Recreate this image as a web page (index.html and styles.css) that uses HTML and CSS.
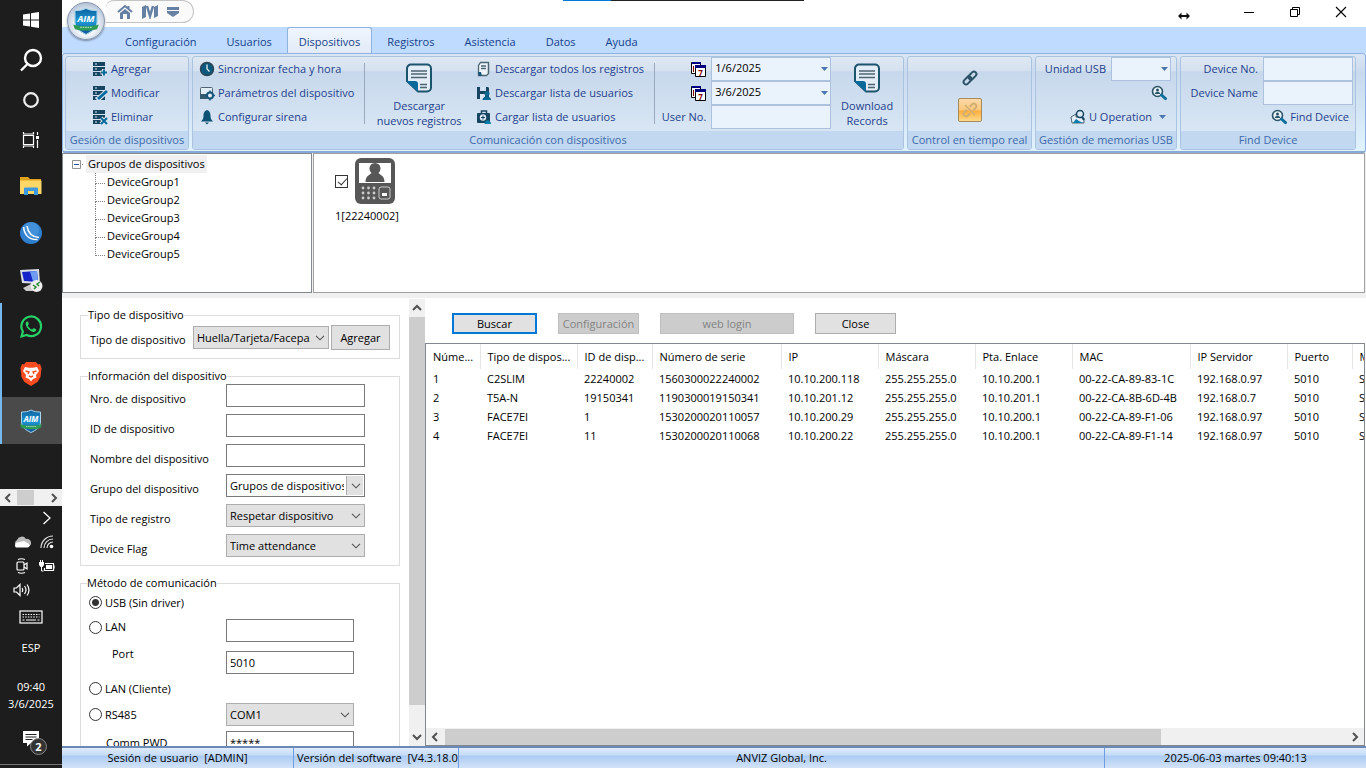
FILE: index.html
```html
<!DOCTYPE html>
<html lang="es">
<head>
    <meta charset="UTF-8">
    <meta name="viewport" content="width=device-width, initial-scale=1.0">
    <title>Dispositivos</title>
    <link rel="stylesheet" href="styles.css">
</head>
<body>

    <svg class="sprite" width="0" height="0" aria-hidden="true">
        <linearGradient id="shield-fill" x1="0" y1="0" x2="0" y2="1">
            <stop offset="0" stop-color="#0c5f9e"/>
            <stop offset=".5" stop-color="#1f9ad6"/>
            <stop offset="1" stop-color="#0d4f96"/>
        </linearGradient>
        <symbol id="i-shield" viewBox="0 0 24 24">
            <path d="M12 1c3 1.800 6 2 9.500 2v10c0 5-4 8-9.500 10.500C6.500 21 2.500 18 2.500 13V3C6 3 9 2.800 12 1z" fill="url(#shield-fill)" stroke="#a9d4ea" stroke-width="1"/>
            <path d="M1 15c6 2 16 2 22 0l-1.500 4c-5 1.600-14 1.600-19 0z" fill="#2f9a55"/>
            <path d="M7 17.500h10" stroke="#9bd8ad" stroke-width="1" stroke-dasharray="1.500 .6"/>
        </symbol>
        <symbol id="i-server" viewBox="0 0 16 16">
            <path d="M1 1h12v4H1zM1 6h12v4H1zM1 11h12v4H1z" fill="#17455f"/>
            <path d="M3 3h2M3 8h2M3 13h2" stroke="#dbe8f5" stroke-width="1"/>
        </symbol>
        <symbol id="i-doc" viewBox="0 0 28 30">
            <path d="M6 1.500h16a4 4 0 0 1 4 4v19a4 4 0 0 1-4 4H13L2 18V5.500a4 4 0 0 1 4-4z" fill="#e3edf7" stroke="#1c536d" stroke-width="2"/>
            <path d="M6 8h16M6 11h16M6 14.500h16M15 21.500h7M15 24.500h7" stroke="#4d6473" stroke-width="1.300"/>
            <path d="M1 18h9c2 0 3 1 3 3v8z" fill="#08699b"/>
        </symbol>
        <symbol id="i-find" viewBox="0 0 16 16">
            <circle cx="6.500" cy="6.500" r="5" fill="#e6f0f8" stroke="#2c5365" stroke-width="1.600"/>
            <circle cx="6.500" cy="5" r="1.500" fill="#2c5365"/>
            <path d="M3.800 9c.5-3 5-3 5.400 0z" fill="#2c5365"/>
            <path d="M10.500 10l4 3.600" stroke="#0e6f9b" stroke-width="3" stroke-linecap="round"/>
        </symbol>
        <symbol id="i-cal" viewBox="0 0 16 16">
            <path d="M1.500 1.500h9v11h-9z" fill="#fff" stroke="#000"/>
            <path d="M2 1h9v2H2z" fill="#000080"/>
            <path d="M5.500 4.500h10v11h-10z" fill="#fff" stroke="#000"/>
            <path d="M5 4h11v3H5z" fill="#000080"/>
            <path d="M3.500 5v6" stroke="#800000"/>
        </symbol>
        <symbol id="i-link" viewBox="0 0 16 16">
            <g transform="rotate(-45 8 8)" fill="none" stroke="currentColor" stroke-width="2">
                <rect x="0" y="5.500" width="9" height="5" rx="2.500"/>
                <rect x="7" y="5.500" width="9" height="5" rx="2.500"/>
            </g>
        </symbol>
        <symbol id="i-unlink" viewBox="0 0 16 16">
            <g transform="rotate(-45 8 8)" fill="none" stroke="currentColor" stroke-width="2">
                <path d="M6 5.500H2.500a2.500 2.500 0 0 0 0 5H6M10 5.500h3.500a2.500 2.500 0 0 1 0 5H10"/>
            </g>
            <path d="M3 3l10 10" stroke="currentColor" stroke-width="1.600"/>
        </symbol>
        <symbol id="i-chev" viewBox="0 0 10 6">
            <path d="M1 .8l4 4 4-4" fill="none" stroke="#555" stroke-width="1.100"/>
        </symbol>
        <symbol id="i-tri" viewBox="0 0 7 4">
            <path d="M0 0h7L3.500 4z" fill="#4a76b0"/>
        </symbol>
        <symbol id="i-arrow" viewBox="0 0 10 10">
            <path d="M7 1L3 5l4 4" fill="none" stroke="#505050" stroke-width="2"/>
        </symbol>
    </svg>

    <nav class="taskbar">
        <div class="pinned">
            <button class="task small" aria-label="Inicio"><svg width="18" height="18" viewBox="0 0 18 18"><path d="M1 3.500l7-1v6H1zM9 2.300L17 1v7.500H9zM1 9.500h7v6l-7-1zM9 9.500h8V17l-8-1.300z" fill="#fff"/></svg></button>
            <button class="task small" aria-label="Buscar"><svg width="24" height="24" viewBox="0 0 24 24"><g fill="none" stroke="#fff" stroke-width="2.400"><circle cx="14" cy="10" r="8"/><path d="M8.500 16L2 22.500"/></g></svg></button>
            <button class="task small" aria-label="Cortana"><svg width="18" height="18" viewBox="0 0 18 18"><circle cx="9" cy="9" r="6.800" fill="none" stroke="#eee" stroke-width="2.200"/></svg></button>
            <button class="task small" aria-label="Vista de tareas"><svg width="18" height="18" viewBox="0 0 18 18"><g fill="none" stroke="#fff" stroke-width="1.200"><path d="M1.500 4.500h10v9h-10zM1.500 1v2h10V1M1.500 17v-2h10v2M15.500 1v3M15.500 9v8"/></g><path d="M14 5h3v3h-3z" fill="#fff"/></svg></button>
        </div>
        <div class="running">
            <button class="task" aria-label="Explorador"><svg width="22" height="18" viewBox="0 0 22 18"><path d="M0 0h8l2 2h11v4H0z" fill="#e0a11b"/><path d="M0 3.500h21.500V17H0z" fill="#fcd667"/><path d="M4 18v-6.500a1 1 0 0 1 1-1h12a1 1 0 0 1 1 1V18h-4v-4H8v4z" fill="#3c98e0"/></svg></button>
            <button class="task" aria-label="Remoto"><svg width="24" height="24" viewBox="0 0 24 24"><circle cx="12" cy="12" r="11" fill="#2f7fcf"/><circle cx="12" cy="9" r="8" fill="#5aa1e3" opacity=".5"/><g fill="none" stroke="#fff" stroke-width="1.600"><path d="M4.500 6c1 8 6 13 14 12.500M8 5c1 7 5 11 12 11.500"/></g></svg></button>
            <button class="task" aria-label="Escritorio remoto"><svg width="24" height="26" viewBox="0 0 24 26"><path d="M1 3l19-1 1 15-18-1z" fill="#d8dde4"/><path d="M3 5l15-1 1 11-14-1z" fill="#1525c8"/><path d="M11 4.500l7-.5 1 11-5-.5z" fill="#6f9bf0"/><path d="M4 21l8-4 6 2-5 5H7z" fill="#ccc"/><circle cx="17.500" cy="19" r="6" fill="#eee"/><path d="M14 18l3 2-2 2M21 15l-3 2 2 2" fill="none" stroke="#248a34" stroke-width="1.500"/></svg></button>
            <button class="task open" aria-label="WhatsApp"><svg width="24" height="24" viewBox="0 0 24 24"><path d="M2.500 21.500l1.400-5A9.800 9.800 0 1 1 7.700 20z" fill="none" stroke="#25d366" stroke-width="2.200"/><path d="M8 6.500c-1 .5-1.800 2-1.200 3.500 1.200 3.500 4 6.200 7.400 7 1.500.3 3-.8 3.200-2.500l-2.800-1.500-1.400 1.500c-2-.7-3.700-2.300-4.400-4.100l1.100-1.300L9 6.500z" fill="#25d366"/></svg></button>
            <button class="task open" aria-label="Brave"><svg width="22" height="24" viewBox="0 0 22 24"><path d="M6 0h10l2 2.500 2-.5 1.500 4-1 9-3 5L11 24l-6.500-4-3-5-1-9L2 2l2 .5z" fill="#fb4b20"/><path d="M5 5l4 .8h4L17 5l2 4-3 4 .500 2.500L13 17l-2 2.500L9 17l-3.500-1.500L6 13 3 9z" fill="#fff"/><path d="M5.500 9l3.500 1-1 2M16.500 9L13 10l1 2M9 14l2 1 2-1" fill="none" stroke="#fb4b20" stroke-width="1.400"/></svg></button>
            <button class="task open active" aria-label="Anviz"><svg width="24" height="24" viewBox="0 0 24 24"><use href="#i-shield"/><text class="logo-text" x="12" y="13" text-anchor="middle">AIM</text></svg></button>
        </div>
        <div class="tray">
            <div class="tray-scroll">
                <svg width="10" height="10"><use href="#i-arrow"/></svg>
                <span class="tray-thumb"></span>
                <svg class="flip" width="10" height="10"><use href="#i-arrow"/></svg>
            </div>
            <div class="tray-icons">
                <span></span>
                <svg width="10" height="14" viewBox="0 0 10 14"><path d="M1.500 1l6.500 6-6.500 6" fill="none" stroke="#fff" stroke-width="1.300"/></svg>
                <svg width="18" height="14" viewBox="0 0 18 14"><path d="M4 12a4 4 0 0 1 0-7 5 5 0 0 1 9-1 4 4 0 0 1 2 8z" fill="#bbb"/><path d="M3 12.500a3 3 0 0 1 1-5l7-1.500 5 3a2.500 2.500 0 0 1-1 3.500z" fill="#fff"/></svg>
                <svg width="14" height="14" viewBox="0 0 14 14"><g fill="none" stroke="#ddd" stroke-width="1.200"><path d="M1 13A12 12 0 0 1 13 1M4 13a9 9 0 0 1 9-9M7 13a6 6 0 0 1 6-6"/></g><circle cx="11.500" cy="11.500" r="1.800" fill="#fff"/></svg>
                <svg width="14" height="16" viewBox="0 0 14 16"><g fill="none" stroke="#fff" stroke-width="1.200"><rect x="2" y="4" width="7" height="8" rx="1"/><path d="M9 7l3-2v6L9 9M3 1.500q3.500-1.500 7 0M3 14.500q3.500 1.500 7 0"/></g></svg>
                <svg width="16" height="12" viewBox="0 0 16 12"><path d="M6 3.500h8.500v7h-9V8M15 5.500v3" fill="none" stroke="#fff" stroke-width="1.200"/><path d="M7 5h6v4H7zM0 2h5v3L3.500 7h-2L0 5z" fill="#fff"/><path d="M1.500 0v2M3.500 0v2M2.500 7v4h2" stroke="#fff" fill="none"/></svg>
                <svg width="18" height="14" viewBox="0 0 18 14"><g fill="none" stroke="#fff" stroke-width="1.200"><path d="M1 5h2.500L7 1.500v11L3.500 9H1zM9 5q1.500 2 0 4M11.500 3q3 4 0 8M14 1.500q4 5.500 0 11"/></g></svg>
                <span></span>
            </div>
            <svg class="tray-key" width="24" height="14" viewBox="0 0 24 14"><rect x="1" y="1" width="22" height="12" fill="none" stroke="#fff" stroke-width="1.200"/><path d="M3.500 4.500h17M3.500 7h17" stroke="#fff" stroke-width="1.200" stroke-dasharray="1.500 1.200"/><path d="M3.500 10h2M7 10h10M18.500 10h2" stroke="#fff"/></svg>
            <span class="tray-lang">ESP</span>
            <time class="tray-clock">09:40<br>3/6/2025</time>
            <button class="notify" aria-label="Notificaciones">
                <svg width="26" height="26" viewBox="0 0 26 26"><path d="M1 1h16v12H9l-4 3.500V13H1z" fill="#fff"/><path d="M3.500 4.500h11M3.500 7h11M3.500 9.500h7" stroke="#222"/><circle cx="16.500" cy="16.500" r="8" fill="#333" stroke="#888"/><text x="16.500" y="20.500" text-anchor="middle" font-size="11" font-weight="bold" fill="#fff">2</text></svg>
            </button>
        </div>
    </nav>

    <div class="app">
        <header class="titlebar">
            <button class="orb" aria-label="Menú"><svg width="28" height="28" viewBox="0 0 24 24"><use href="#i-shield"/><text class="logo-text" x="12" y="13" text-anchor="middle">AIM</text></svg></button>
            <div class="quick">
                <button aria-label="Inicio"><svg width="16" height="16" viewBox="0 0 16 16"><path d="M1 8l7-6 7 6M11.500 2v3" fill="none" stroke="#6680a4" stroke-width="2"/><path d="M3 9l5-4 5 4v6h-3v-5H6v5H3z" fill="#6680a4"/></svg></button>
                <button aria-label="Vista"><svg width="16" height="14" viewBox="0 0 16 14"><path d="M0 2l4-2v12l-4 2zM12 2l4-2v11l-4 2z" fill="#6680a4"/><path d="M5 1l3 10 3-10" fill="none" stroke="#6680a4" stroke-width="2.500"/></svg></button>
                <button aria-label="Más"><svg width="12" height="12" viewBox="0 0 12 12"><path d="M0 1h12v3H0zM0 5h12v2l-6 4-6-4z" fill="#6680a4"/></svg></button>
            </div>
            <span class="top-line"></span>
            <div class="window-buttons">
                <svg width="12" height="8" viewBox="0 0 12 8"><path d="M0 4l3.500-3.500V3h5V.5L12 4 8.500 7.500V5h-5v2.500z" fill="#111"/></svg>
                <button aria-label="Minimizar"><svg width="12" height="12" viewBox="0 0 12 12"><path d="M1 6.500h10" stroke="#000"/></svg></button>
                <button aria-label="Restaurar"><svg width="12" height="12" viewBox="0 0 12 12"><path d="M1.500 3.500h7v7h-7zM3.500 3V1.500h7v7H9" fill="none" stroke="#000"/></svg></button>
                <button aria-label="Cerrar"><svg width="12" height="12" viewBox="0 0 12 12"><path d="M1 1l10 10M11 1L1 11" stroke="#000" stroke-width="1.100"/></svg></button>
            </div>
        </header>

        <nav class="tabs">
            <a href="#">Configuración</a>
            <a href="#">Usuarios</a>
            <a href="#" class="current">Dispositivos</a>
            <a href="#">Registros</a>
            <a href="#">Asistencia</a>
            <a href="#">Datos</a>
            <a href="#">Ayuda</a>
        </nav>

        <div class="ribbon">
            <section class="group g-manage">
                <div class="group-body">
                    <div class="cmds">
                        <button><svg width="16" height="16" viewBox="0 0 16 16"><use href="#i-server"/><path d="M12 8v7M8.500 11.500h7" stroke="#dbe8f5" stroke-width="4"/><path d="M12 8.500v6M9 11.500h6" stroke="#08699b" stroke-width="2"/></svg>Agregar</button>
                        <button><svg width="16" height="16" viewBox="0 0 16 16"><use href="#i-server"/><path d="M5 15L15 6" stroke="#dbe8f5" stroke-width="5"/><path d="M6 14l9-8" stroke="#08699b" stroke-width="3"/></svg>Modificar</button>
                        <button><svg width="16" height="16" viewBox="0 0 16 16"><use href="#i-server"/><path d="M9 9l6 6M15 9l-6 6" stroke="#dbe8f5" stroke-width="4"/><path d="M9 9l6 6M15 9l-6 6" stroke="#08699b" stroke-width="2"/></svg>Eliminar</button>
                    </div>
                </div>
                <h2>Gesión de dispositivos</h2>
            </section>

            <section class="group g-comm">
                <div class="group-body">
                    <div class="cmds">
                        <button><svg width="16" height="16" viewBox="0 0 16 16"><circle cx="8" cy="8" r="6.500" fill="#08587f" stroke="#2c4654" stroke-width="1.500"/><path d="M8 3.500V8l2.500 2.500" fill="none" stroke="#fff" stroke-width="1.200"/></svg>Sincronizar fecha y hora</button>
                        <button><svg width="16" height="16" viewBox="0 0 16 16"><rect x="1.500" y="2.500" width="12" height="9" rx="1" fill="#e3edf7" stroke="#4d6473"/><path d="M1 9h7v5H1z" fill="#345a70"/><circle cx="11" cy="10.500" r="3" fill="#e3edf7" stroke="#17557a" stroke-width="2"/><path d="M11 5.500v2M11 13.500v2M6 10.500h2M14 10.500h2" stroke="#17557a" stroke-width="1.500"/></svg>Parámetros del dispositivo</button>
                        <button><svg width="16" height="16" viewBox="0 0 16 16"><path d="M8 1c3 1 3.500 3.500 3.500 6 0 2.500 1 4 2.500 5.500H2C3.500 11 4.500 9.500 4.500 7 4.500 4.500 5 2 8 1z" fill="#0b5275"/><path d="M6 13.500h4L8 15.500z" fill="#0b5275"/></svg>Configurar sirena</button>
                    </div>
                    <span class="sep"></span>
                    <button class="big"><svg width="28" height="30"><use href="#i-doc"/></svg>Descargar<br>nuevos registros</button>
                    <div class="cmds">
                        <button><svg width="16" height="16" viewBox="0 0 16 16"><path d="M4.500 1.500h8v11l-2 2h-8v-10z" fill="#eef4fa" stroke="#4d6473" stroke-width="1.300"/><path d="M5 5h5M5 7.500h5M12.500 3v9" stroke="#4d6473" stroke-width="1.300"/><path d="M2 11h3l1 4H3z" fill="#17557a"/></svg>Descargar todos los registros</button>
                        <button><svg width="16" height="16" viewBox="0 0 16 16"><path d="M1 2h3v4h6V2h2l1 1v11H1z" fill="#17455f"/><path d="M6 2h2v3H6zM4 9h5v5H4z" fill="#dbe8f5"/><circle cx="11" cy="8.500" r="2.500" fill="#0a658f"/><path d="M6.500 15c.5-5 8-5 8.500 0z" fill="#0a658f"/></svg>Descargar lista de usuarios</button>
                        <button><svg width="16" height="16" viewBox="0 0 16 16"><path d="M5.500 4V2h5v2" fill="none" stroke="#17455f" stroke-width="1.500"/><rect x="1" y="4" width="13" height="10" rx="1" fill="#17455f"/><circle cx="7" cy="8.500" r="3.200" fill="#dbe8f5"/><path d="M7 6.500v4M5 8.500h4" stroke="#17455f"/><path d="M8.500 15c.5-5 6-5 6.500 0z" fill="#0a7cab"/></svg>Cargar lista de usuarios</button>
                    </div>
                    <span class="sep"></span>
                    <div class="fields f-dates">
                        <label for="from" aria-label="Desde"><svg width="16" height="16" viewBox="0 0 16 16"><use href="#i-cal"/><text class="cal-text" x="10.500" y="14.500" text-anchor="middle">7</text></svg></label>
                        <span class="combo"><input id="from" type="text" value="1/6/2025"><svg width="7" height="4"><use href="#i-tri"/></svg></span>
                        <label for="to" aria-label="Hasta"><svg width="16" height="16" viewBox="0 0 16 16"><use href="#i-cal"/><text class="cal-text" x="10.500" y="14.500" text-anchor="middle">7</text></svg></label>
                        <span class="combo"><input id="to" type="text" value="3/6/2025"><svg width="7" height="4"><use href="#i-tri"/></svg></span>
                        <label for="userno">User No.</label>
                        <span class="combo"><input id="userno" type="text"></span>
                    </div>
                    <button class="big"><svg width="28" height="30"><use href="#i-doc"/></svg>Download<br>Records</button>
                </div>
                <h2>Comunicación con dispositivos</h2>
            </section>

            <section class="group g-real">
                <div class="group-body">
                    <button class="link-btn" aria-label="Conectar"><svg width="16" height="16"><use href="#i-link"/></svg></button>
                    <button class="link-btn hot" aria-label="Desconectar"><svg width="16" height="16"><use href="#i-unlink"/></svg></button>
                </div>
                <h2>Control en tiempo real</h2>
            </section>

            <section class="group g-usb">
                <div class="group-body">
                    <div class="usb-row">
                        <label for="usb">Unidad USB</label>
                        <span class="combo"><input id="usb" type="text"><svg width="7" height="4"><use href="#i-tri"/></svg></span>
                    </div>
                    <button class="usb-find" aria-label="Buscar"><svg width="16" height="16"><use href="#i-find"/></svg></button>
                    <button class="usb-op"><svg width="16" height="16" viewBox="0 0 16 16"><path d="M1 8l5-3v3l8 1v5H2z" fill="#e3edf7" stroke="#4d6473"/><circle cx="10" cy="5" r="3.500" fill="#dbe8f5" stroke="#17455f" stroke-width="1.500"/><path d="M12 8l2 3" stroke="#17455f" stroke-width="2"/><path d="M3 14l3-4 3 2 4 2z" fill="#0a7cab"/></svg>U Operation<svg width="7" height="4"><use href="#i-tri"/></svg></button>
                </div>
                <h2>Gestión de memorias USB</h2>
            </section>

            <section class="group g-find">
                <div class="group-body">
                    <div class="fields f-find">
                        <label for="devno">Device No.</label>
                        <span class="combo"><input id="devno" type="text"></span>
                        <label for="devname">Device Name</label>
                        <span class="combo"><input id="devname" type="text"></span>
                    </div>
                    <button class="find-btn"><svg width="16" height="16"><use href="#i-find"/></svg>Find Device</button>
                </div>
                <h2>Find Device</h2>
            </section>
        </div>

        <div class="overview">
            <div class="tree">
                <div class="tree-root"><svg width="12" height="9" viewBox="0 0 12 9"><path d="M.5.5h8v8h-8z" fill="#fff" stroke="#919191"/><path d="M2 4.500h5" stroke="#2b4fa0"/><path d="M10 4.500h2" stroke="#808080" stroke-dasharray="1 1"/></svg><span>Grupos de dispositivos</span></div>
                <ul>
                    <li>DeviceGroup1</li>
                    <li>DeviceGroup2</li>
                    <li>DeviceGroup3</li>
                    <li>DeviceGroup4</li>
                    <li>DeviceGroup5</li>
                </ul>
            </div>
            <div class="device-list">
                <div class="device">
                    <input type="checkbox" id="dev1" checked>
                    <svg width="42" height="46" viewBox="0 0 42 46"><rect x="1" y="0" width="40" height="46" rx="6" fill="#575757"/><path d="M5 5h32v20H5z" fill="#fff"/><circle cx="21" cy="10.500" r="5.500" fill="#575757"/><path d="M11.500 24c0-6 4-7 6-9h7c2 2 6 3 6 9z" fill="#575757"/><g fill="#ccc"><circle cx="9" cy="30" r="1.400"/><circle cx="14.500" cy="30" r="1.400"/><circle cx="20" cy="30" r="1.400"/><circle cx="9" cy="35" r="1.400"/><circle cx="14.500" cy="35" r="1.400"/><circle cx="20" cy="35" r="1.400"/><circle cx="9" cy="40" r="1.400"/><circle cx="14.500" cy="40" r="1.400"/><circle cx="20" cy="40" r="1.400"/></g><rect x="25" y="29" width="11" height="12" rx="2" fill="none" stroke="#ccc"/><path d="M28 35h5v3h-5z" fill="#fff"/></svg>
                    <label for="dev1">1[22240002]</label>
                </div>
            </div>
        </div>

        <main class="work">
            <div class="form-pane">
                <form class="forms">
                    <fieldset class="fs-type">
                        <legend>Tipo de dispositivo</legend>
                        <label for="type">Tipo de dispositivo</label>
                        <span class="select"><select id="type"><option>Huella/Tarjeta/Facepass</option></select><svg width="10" height="6"><use href="#i-chev"/></svg></span>
                        <button type="button">Agregar</button>
                    </fieldset>
                    <fieldset class="fs-info">
                        <legend>Información del dispositivo</legend>
                        <label for="num">Nro. de dispositivo</label>
                        <input id="num" type="text">
                        <label for="devid">ID de dispositivo</label>
                        <input id="devid" type="text">
                        <label for="name">Nombre del dispositivo</label>
                        <input id="name" type="text">
                        <label for="grp">Grupo del dispositivo</label>
                        <span class="select editable"><select id="grp"><option>Grupos de dispositivos</option></select><svg width="10" height="6"><use href="#i-chev"/></svg></span>
                        <label for="reg">Tipo de registro</label>
                        <span class="select"><select id="reg"><option>Respetar dispositivo</option></select><svg width="10" height="6"><use href="#i-chev"/></svg></span>
                        <label for="flag">Device Flag</label>
                        <span class="select"><select id="flag"><option>Time attendance</option></select><svg width="10" height="6"><use href="#i-chev"/></svg></span>
                    </fieldset>
                    <fieldset class="fs-comm">
                        <legend>Método de comunicación</legend>
                        <label class="wide"><input type="radio" name="comm" checked>USB (Sin driver)</label>
                        <label><input type="radio" name="comm">LAN</label>
                        <input type="text" aria-label="LAN">
                        <label class="sub" for="port">Port</label>
                        <input id="port" type="text" value="5010">
                        <label class="wide"><input type="radio" name="comm">LAN (Cliente)</label>
                        <label class="mid"><input type="radio" name="comm">RS485</label>
                        <span class="select"><select aria-label="RS485"><option>COM1</option></select><svg width="10" height="6"><use href="#i-chev"/></svg></span>
                        <label class="sub mid" for="pwd">Comm PWD</label>
                        <input id="pwd" type="text" value="*****">
                    </fieldset>
                </form>
                <div class="vscroll">
                    <svg class="up" width="10" height="10"><use href="#i-arrow"/></svg>
                    <span class="vthumb"></span>
                    <svg class="down" width="10" height="10"><use href="#i-arrow"/></svg>
                </div>
            </div>

            <div class="results">
                <div class="actions">
                    <button class="b-search default">Buscar</button>
                    <button class="b-conf" disabled>Configuración</button>
                    <button class="b-web" disabled>web login</button>
                    <button class="b-close">Close</button>
                </div>
                <div class="grid">
                    <div class="grid-view">
                        <table>
                            <colgroup>
                                <col class="c-num"><col class="c-std"><col class="c-id"><col class="c-serial"><col class="c-std"><col class="c-std"><col class="c-std"><col class="c-mac"><col class="c-std"><col class="c-port"><col class="c-std">
                            </colgroup>
                            <thead>
                                <tr><th>Núme...</th><th>Tipo de dispos...</th><th>ID de disp...</th><th>Número de serie</th><th>IP</th><th>Máscara</th><th>Pta. Enlace</th><th>MAC</th><th>IP Servidor</th><th>Puerto</th><th>M</th></tr>
                            </thead>
                            <tbody>
                                <tr><td>1</td><td>C2SLIM</td><td>22240002</td><td>1560300022240002</td><td>10.10.200.118</td><td>255.255.255.0</td><td>10.10.200.1</td><td>00-22-CA-89-83-1C</td><td>192.168.0.97</td><td>5010</td><td>S</td></tr>
                                <tr><td>2</td><td>T5A-N</td><td>19150341</td><td>1190300019150341</td><td>10.10.201.12</td><td>255.255.255.0</td><td>10.10.201.1</td><td>00-22-CA-8B-6D-4B</td><td>192.168.0.7</td><td>5010</td><td>S</td></tr>
                                <tr><td>3</td><td>FACE7EI</td><td>1</td><td>1530200020110057</td><td>10.10.200.29</td><td>255.255.255.0</td><td>10.10.200.1</td><td>00-22-CA-89-F1-06</td><td>192.168.0.97</td><td>5010</td><td>S</td></tr>
                                <tr><td>4</td><td>FACE7EI</td><td>11</td><td>1530200020110068</td><td>10.10.200.22</td><td>255.255.255.0</td><td>10.10.200.1</td><td>00-22-CA-89-F1-14</td><td>192.168.0.97</td><td>5010</td><td>S</td></tr>
                            </tbody>
                        </table>
                    </div>
                    <div class="hscroll">
                        <svg width="10" height="10"><use href="#i-arrow"/></svg>
                        <span class="htrack"><span class="hthumb"></span></span>
                        <svg class="flip" width="10" height="10"><use href="#i-arrow"/></svg>
                    </div>
                </div>
            </div>
        </main>

        <footer class="status">
            <span class="s-user">Sesión de usuario&nbsp; [ADMIN]</span>
            <span class="s-version">Versión del software&nbsp; [V4.3.18.0]</span>
            <span class="s-company">ANVIZ Global, Inc.</span>
            <span class="s-time">2025-06-03 martes 09:40:13</span>
        </footer>
    </div>

</body>
</html>
```
FILE: styles.css
```css
* {
    margin: 0;
    padding: 0;
    box-sizing: border-box;
}

body {
    font-family: 'Segoe UI', 'Open Sans', 'Noto Sans', sans-serif;
    font-size: 11px;
    line-height: 16px;
    color: #000;
    background-color: #fff;
    display: flex;
    height: 100vh;
    overflow: hidden;
}

button,
input,
select {
    font: inherit;
    color: inherit;
}

button {
    background: none;
    border: none;
    white-space: nowrap;
}

svg {
    display: block;
    flex: none;
}

.sprite {
    position: absolute;
}

.logo-text {
    font-size: 8px;
    font-weight: bold;
    font-style: italic;
    fill: #fff;
}

.cal-text {
    font-size: 8px;
    font-weight: bold;
    fill: #800000;
}

/* Taskbar */
.taskbar {
    width: 62px;
    flex: none;
    display: flex;
    flex-direction: column;
    justify-content: space-between;
    background-color: #1d1d1d;
    color: #fff;
}

.pinned {
    margin-bottom: 2px;
}

.task {
    display: flex;
    align-items: center;
    justify-content: center;
    width: 100%;
    height: 47px;
    border-left: 2px solid transparent;
    border-right: 2px solid transparent;
}

.task.small {
    height: 40px;
}

.task.open {
    border-left-color: #76b9ed;
}

.task.active {
    background-color: #4a4a4a;
    border-right-color: #4a4a4a;
}

.running {
    flex: 1;
}

.tray {
    display: flex;
    flex-direction: column;
    align-items: center;
    border-bottom: 1px solid #777;
    margin-bottom: 3px;
}

.tray-scroll {
    width: 100%;
    height: 17px;
    display: flex;
    align-items: center;
    padding: 0 3px;
    background-color: #f0f0f0;
}

.tray-thumb {
    width: 17px;
    height: 15px;
    margin: 0 auto 0 4px;
    background-color: #cdcdcd;
}

.flip {
    transform: rotate(180deg);
}

.tray-icons {
    display: grid;
    grid-template-columns: 25px 25px;
    grid-auto-rows: 24px;
    place-items: center;
    margin-left: 6px;
}

.tray-key {
    margin: 8px 0 16px;
}

.tray-lang {
    margin-bottom: 22px;
}

.tray-clock {
    line-height: 17px;
    text-align: center;
}

.notify {
    margin: 18px 0 8px;
    padding-left: 8px;
}

/* Window */
.app {
    flex: 1;
    min-width: 0;
    display: flex;
    flex-direction: column;
    position: relative;
}

.titlebar {
    height: 27px;
    flex: none;
    display: flex;
    justify-content: space-between;
    padding-left: 44px;
}

.orb {
    position: absolute;
    left: 5px;
    top: 2px;
    z-index: 1;
    width: 38px;
    height: 38px;
    display: flex;
    align-items: center;
    justify-content: center;
    border: 1px solid #8796ad;
    border-radius: 50%;
    background: radial-gradient(circle at 50% 60%, #f7f9fc 35%, #b7c5d9 75%);
    box-shadow: 0 1px 2px rgba(0, 0, 0, 0.4);
}

.quick {
    display: flex;
    align-items: center;
    gap: 9px;
    width: 88px;
    height: 23px;
    padding-left: 11px;
    border: 1px solid #c4c4c4;
    border-left: none;
    border-radius: 8px 12px 12px 0;
    background-color: #fafafa;
}

.top-line {
    position: absolute;
    left: 501px;
    top: 0;
    width: 241px;
    height: 1px;
    background: linear-gradient(to right, #0078d7 20%, #222 20%);
}

.window-buttons {
    display: flex;
    align-items: center;
    gap: 34px;
    padding-right: 19px;
    height: 24px;
}

.window-buttons > svg {
    margin: 8px 19px 0 0;
}

.tabs {
    display: flex;
    align-items: flex-end;
    height: 26px;
    flex: none;
    padding-left: 48px;
    background-color: #bfdbff;
}

.tabs a {
    height: 25px;
    padding: 6px 15px 0;
    color: #15428b;
    text-decoration: none;
}

.tabs .current {
    z-index: 1;
    height: 26px;
    padding: 6px 11px 0;
    border: 1px solid #8db2e3;
    border-bottom: none;
    border-radius: 3px 3px 0 0;
    background: linear-gradient(#f0f6fe, #e1eaf6);
}

.ribbon {
    display: flex;
    gap: 3px;
    flex: none;
    height: 100px;
    padding: 2px;
    border: 1px solid #8db2e3;
    border-bottom: 2px solid #86a9d6;
    border-radius: 3px;
    background: linear-gradient(#dbe6f4, #c9daee 20%, #e0f3fd);
    color: #1e3f8c;
}

.group {
    display: flex;
    flex-direction: column;
    height: 94px;
    flex: none;
    border: 1px solid #a9c3e0;
    border-radius: 3px;
    background: linear-gradient(#dfe8f3, #d5e1f0 15%, #c7d8ec 16%, #d8e6f4 80%);
    overflow: hidden;
}

.group h2 {
    height: 18px;
    font-size: 11px;
    font-weight: normal;
    line-height: 17px;
    text-align: center;
    white-space: nowrap;
    color: #3e6aaa;
    background-color: #c1d8f0;
}

.group-body {
    display: flex;
    flex: 1;
}

.g-manage {
    width: 124px;
}

.g-manage .group-body {
    padding-left: 26px;
}

.g-comm {
    width: 712px;
}

.g-real {
    width: 125px;
}

.g-usb {
    width: 142px;
}

.g-find {
    width: 176px;
}

.cmds button,
.find-btn,
.usb-op {
    display: flex;
    align-items: center;
    gap: 3px;
    height: 24px;
}

.g-comm .cmds {
    width: 167px;
    padding-left: 6px;
}

.g-comm .big + .cmds {
    width: 182px;
    padding-left: 8px;
}

.sep {
    width: 1px;
    margin: 6px 5px 7px;
    background-color: #9aa9bd;
}

.big {
    display: flex;
    flex-direction: column;
    align-items: center;
    width: 98px;
    padding-top: 6px;
    line-height: 15px;
}

.big svg {
    margin-bottom: 5px;
}

.fields {
    display: grid;
    grid-auto-rows: 24px;
    align-items: center;
    justify-items: end;
    column-gap: 5px;
    white-space: nowrap;
}

.f-dates {
    grid-template-columns: 46px 120px;
}

.f-dates + .big {
    width: 72px;
}

.f-find {
    grid-template-columns: 77px 90px;
}

.combo {
    position: relative;
    width: 100%;
    height: 24px;
}

.combo svg {
    position: absolute;
    right: 3px;
    top: 10px;
}

.g-real .group-body {
    flex-direction: column;
    align-items: center;
    gap: 8px;
    padding-top: 9px;
}

.link-btn {
    display: flex;
    align-items: center;
    justify-content: center;
    width: 24px;
    height: 24px;
    color: #2c5365;
}

.link-btn.hot {
    color: #cfae74;
    border: 1px solid #a88a5c;
    border-radius: 2px;
    background: linear-gradient(#fbd9a8, #fdc77a 50%, #feae3c 55%, #ffd98a);
}

.g-usb .group-body,
.g-find .group-body {
    flex-direction: column;
    align-items: flex-end;
}

.usb-row {
    display: flex;
    align-items: center;
    gap: 5px;
    padding-right: 5px;
}

.usb-row .combo {
    width: 60px;
}

.usb-find {
    height: 24px;
    padding-right: 9px;
}

.usb-op {
    padding-right: 10px;
}

.usb-op svg:last-child {
    margin-left: 4px;
}

.f-find,
.find-btn {
    margin-right: 2px;
}

.find-btn {
    padding-right: 4px;
}

/* Device overview */
.overview {
    display: flex;
    gap: 1px;
    height: 145px;
    flex: none;
    padding: 0 1px 5px 0;
    background-color: #f0f0f0;
}

.tree {
    width: 250px;
    padding: 1px 9px;
    border: 1px solid #828790;
    background-color: #fff;
}

.tree-root {
    display: flex;
    align-items: center;
    gap: 2px;
    height: 18px;
}

.tree-root span {
    padding: 0 2px;
    line-height: 18px;
    background-color: #f0f0f0;
}

.tree ul {
    list-style: none;
    margin-left: 23px;
}

.tree li {
    position: relative;
    padding-left: 12px;
    line-height: 18px;
}

.tree li::before {
    content: "";
    position: absolute;
    left: 0;
    top: 0;
    width: 9px;
    height: 10px;
    border-left: 1px dotted #808080;
    border-bottom: 1px dotted #808080;
}

.tree li:not(:last-child)::after {
    content: "";
    position: absolute;
    left: 0;
    top: 10px;
    height: 8px;
    border-left: 1px dotted #808080;
}

.device-list {
    flex: 1;
    padding: 4px 21px;
    border: 1px solid #a0a0a0;
    background-color: #fff;
}

.device {
    display: grid;
    grid-template-columns: 13px 42px;
    column-gap: 6px;
    row-gap: 4px;
    align-items: center;
    width: 66px;
}

.device label {
    grid-column: span 2;
    text-align: center;
}

input[type="checkbox"] {
    appearance: none;
    position: relative;
    width: 13px;
    height: 13px;
    border: 1px solid #333;
    background-color: #fff;
}

input[type="checkbox"]:checked::after {
    content: "";
    position: absolute;
    left: 4px;
    top: 0;
    width: 4px;
    height: 8px;
    border: solid #333;
    border-width: 0 1px 1px 0;
    transform: rotate(42deg);
}

/* Work area */
.work {
    flex: 1;
    min-height: 0;
    display: flex;
}

.form-pane {
    display: flex;
    width: 363px;
    flex: none;
    padding-right: 1px;
    overflow: hidden;
}

.forms {
    flex: 1;
    display: flex;
    flex-direction: column;
    gap: 9px;
    padding: 9px 9px 0 18px;
}

fieldset {
    border: 1px solid #dcdcdc;
    padding: 0 9px 8px;
    white-space: nowrap;
}

legend {
    margin-left: -2px;
}

.fs-type {
    display: flex;
    align-items: center;
    gap: 2px;
    padding-top: 2px;
}

.fs-type label {
    width: 101px;
    padding-top: 4px;
}

.fs-type .select {
    width: 136px;
}

.forms button {
    width: 59px;
    height: 25px;
    border: 1px solid #adadad;
    background-color: #e1e1e1;
}

.fs-info {
    display: grid;
    grid-template-columns: 136px 139px;
    grid-auto-rows: 23px;
    row-gap: 7px;
}

.fs-info label {
    padding-top: 7px;
}

.fs-comm {
    display: grid;
    grid-template-columns: 137px 128px;
    grid-template-rows: 23px 22px 28px 19px 23px 23px;
    row-gap: 5px;
    padding-left: 8px;
}

.fs-comm label {
    display: flex;
    align-items: center;
    gap: 3px;
    height: 16px;
}

.fs-comm .wide {
    grid-column: span 2;
    align-self: center;
}

.fs-comm .mid {
    align-self: center;
}

.fs-comm .sub {
    padding-left: 23px;
}

.fs-comm .sub.mid {
    padding-left: 17px;
}

#port {
    align-self: end;
}

input[type="text"] {
    min-width: 0;
    border: 1px solid #7a7a7a;
    padding: 0 3px;
    height: 23px;
}

.combo input[type="text"] {
    width: 100%;
    height: 24px;
    padding-bottom: 3px;
    border-color: #abc1de;
    background-color: #eaf2fb;
    color: #000;
}

input[type="radio"] {
    appearance: none;
    width: 13px;
    height: 13px;
    border: 1px solid #333;
    border-radius: 50%;
}

input[type="radio"]:checked {
    background: radial-gradient(#333 0 3px, #fff 4px);
}

.select {
    position: relative;
    display: block;
    height: 23px;
}

.select select {
    appearance: none;
    width: 100%;
    height: 23px;
    padding: 0 18px 0 3px;
    border: 1px solid #adadad;
    border-radius: 0;
    background-color: #e1e1e1;
}

.select svg {
    position: absolute;
    right: 4px;
    top: 9px;
}

.editable select {
    padding-right: 20px;
    border-color: #7a7a7a;
    background-color: #fff;
}

.editable::after {
    content: "";
    position: absolute;
    right: 2px;
    top: 2px;
    width: 16px;
    height: 19px;
    border-left: 1px solid #adadad;
    background-color: #e1e1e1;
}

.editable svg {
    z-index: 1;
}

.vscroll {
    width: 16px;
    margin-top: 1px;
    display: flex;
    flex-direction: column;
    align-items: center;
    background-color: #f0f0f0;
}

.vthumb {
    width: 16px;
    height: 90%;
    max-height: calc(100% - 59px);
    margin-top: 4px;
    background-color: #cdcdcd;
}

.up {
    margin-top: 4px;
    transform: rotate(90deg);
}

.down {
    margin: auto 0 4px;
    transform: rotate(-90deg);
}

.results {
    flex: 1;
    min-width: 0;
    display: flex;
    flex-direction: column;
    padding-right: 1px;
}

.actions {
    display: flex;
    gap: 21px;
    padding: 15px 27px 9px;
}

.actions button {
    width: 81px;
    height: 21px;
    line-height: 19px;
    border: 1px solid #adadad;
    background-color: #e1e1e1;
}

.actions .default {
    width: 85px;
    border: 2px solid #0078d7;
    line-height: 17px;
}

.actions .b-web {
    width: 134px;
}

.actions button:disabled {
    color: #838383;
    border-color: #bfbfbf;
    background-color: #ccc;
}

.grid {
    flex: 1;
    min-height: 0;
    display: flex;
    flex-direction: column;
    border: 1px solid #828790;
}

.grid-view {
    flex: 1;
    overflow: hidden;
}

table {
    width: 1023px;
    table-layout: fixed;
    border-collapse: collapse;
}

.c-num { width: 54px; }
.c-std { width: 97px; }
.c-id { width: 75px; }
.c-serial { width: 129px; }
.c-mac { width: 118px; }
.c-port { width: 65px; }

th,
td {
    height: 19px;
    padding: 0 0 0 7px;
    text-align: left;
    font-weight: normal;
    white-space: nowrap;
}

th {
    height: 25px;
    border-right: 1px solid #e5e5e5;
}

.hscroll {
    display: flex;
    align-items: center;
    height: 17px;
    padding: 0 4px;
    background-color: #f0f0f0;
}

.htrack {
    flex: 1;
    height: 16px;
    margin: 0 5px;
}

.hthumb {
    display: block;
    width: calc(80% - 4px);
    height: 16px;
    background-color: #cdcdcd;
}

/* Status bar */
.status {
    display: flex;
    height: 22px;
    flex: none;
    border-top: 2px solid #6b89b5;
    background: linear-gradient(#dfebfb, #c6dcf8 35%, #abcbf3 40%, #d3e3f8);
    line-height: 19px;
    white-space: nowrap;
}

.status span {
    overflow: hidden;
    text-align: center;
    border-right: 1px solid #6f9ddd;
}

.status .s-user {
    width: 232px;
}

.status .s-version {
    width: 165px;
    padding-left: 3px;
    text-align: left;
}

.status .s-company {
    flex: 1;
}

.status .s-time {
    width: 261px;
    border-right: none;
}
```
